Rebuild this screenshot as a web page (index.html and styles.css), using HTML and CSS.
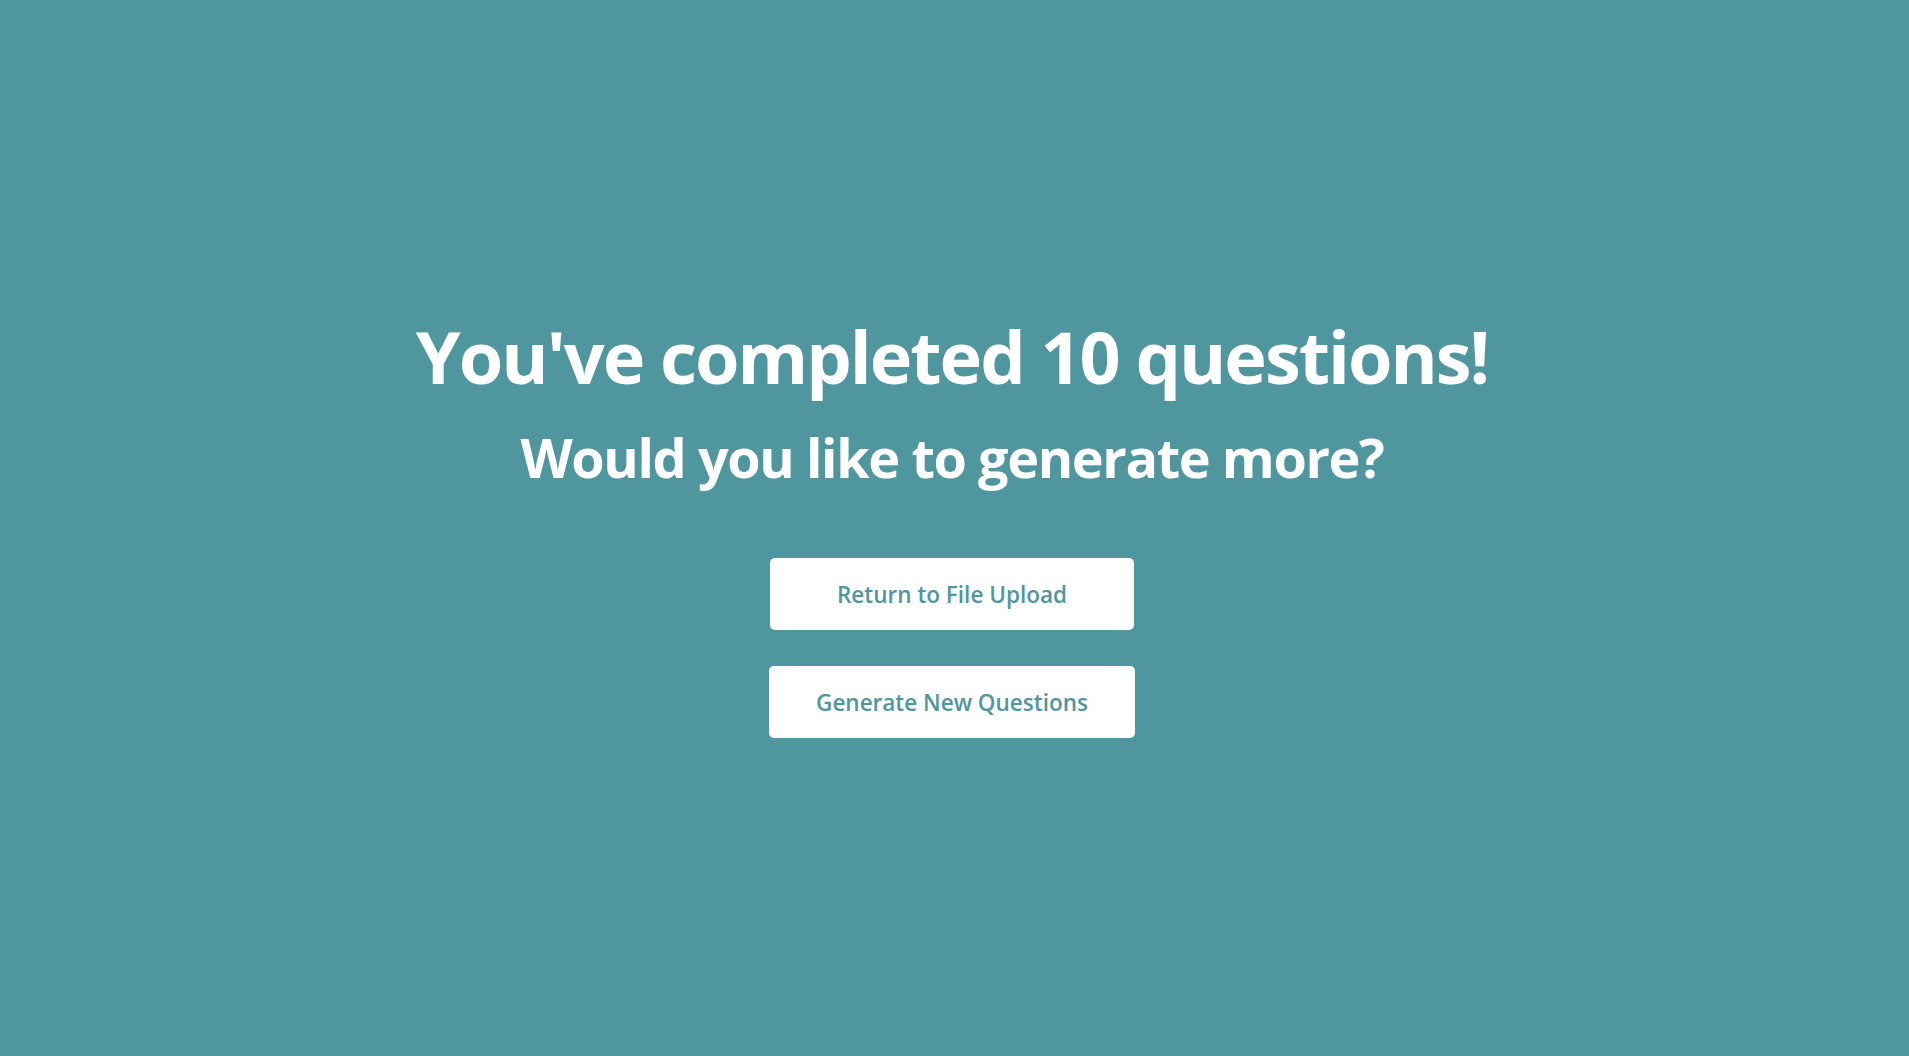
FILE: index.html
```html
<!DOCTYPE html>
<html lang="en">
<head>
<meta charset="utf-8">
<title>Quiz Complete</title>
<link rel="stylesheet" href="styles.css">
</head>
<body>
<main class="done">
  <h1 class="done-title">You've completed 10 questions!</h1>
  <h2 class="done-sub">Would you like to generate more?</h2>
  <div class="actions">
    <button class="btn btn-upload" type="button">Return to File Upload</button>
    <button class="btn btn-generate" type="button">Generate New Questions</button>
  </div>
</main>
</body>
</html>
```
FILE: styles.css
```css
html, body {
  margin: 0;
  padding: 0;
}
body {
  background: #4f969e;
  font-family: "Open Sans", "Noto Sans", sans-serif;
  color: #ffffff;
}
.done {
  min-height: 100vh;
  box-sizing: border-box;
  padding-bottom: 5px;
  padding-right: 5px;
  display: flex;
  flex-direction: column;
  align-items: center;
  justify-content: center;
  text-align: center;
}
.done-title {
  margin: 0;
  font-size: 72px;
  line-height: 1.2;
  font-weight: 700;
  letter-spacing: -2px;
}
.done-sub {
  margin: 26px 0 0;
  font-size: 54px;
  line-height: 1.2;
  font-weight: 700;
  letter-spacing: -1.4px;
}
.actions {
  margin-top: 68px;
  display: flex;
  flex-direction: column;
  align-items: center;
  gap: 36px;
}
.btn {
  height: 72px;
  border: none;
  border-radius: 5px;
  background: #ffffff;
  color: #4f969e;
  font-family: "Open Sans", "Noto Sans", sans-serif;
  font-size: 22.5px;
  font-weight: 600;
  padding: 0;
  cursor: pointer;
}
.btn-upload {
  width: 364px;
}
.btn-generate {
  width: 366px;
}
```
